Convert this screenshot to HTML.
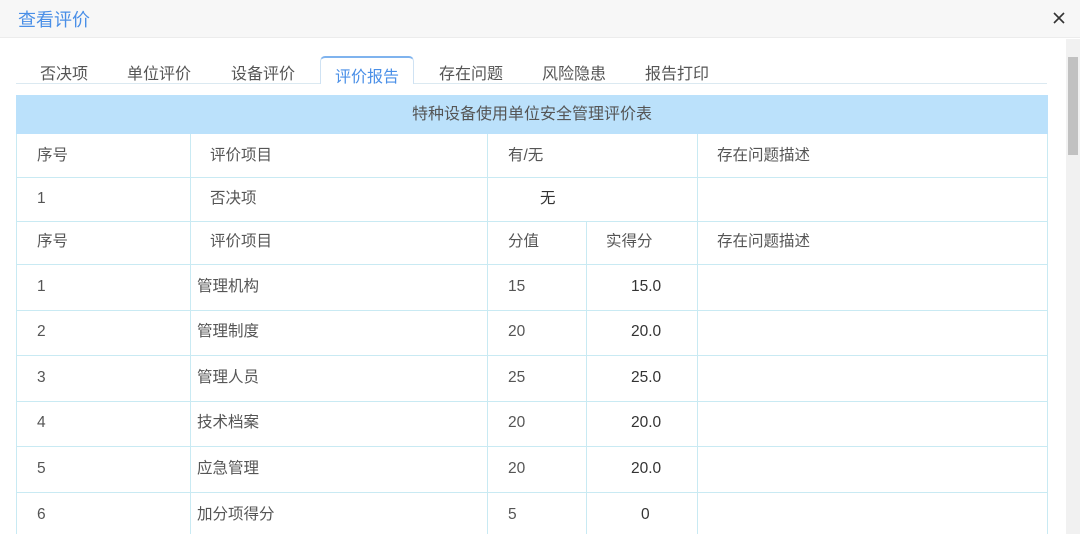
<!DOCTYPE html>
<html><head><meta charset="utf-8"><style>
*{margin:0;padding:0;box-sizing:border-box}
body{width:1080px;height:534px;overflow:hidden;background:#fff;font-family:"Liberation Sans","Noto Sans CJK SC",sans-serif;position:relative;color:#555;font-size:14px}
.hd{position:absolute;left:0;top:0;width:1080px;height:38px;background:#f7f7f7;border-bottom:1px solid #ececec}
.ttl{position:absolute;left:18px;top:6px;font-size:18px;color:#4a8fe7}
.x{position:absolute;left:1052px;top:11px;width:14px;height:14px}
.sb{position:absolute;left:1066px;top:39px;width:14px;height:495px;background:#f1f1f1}
.th{position:absolute;left:1068px;top:57px;width:10px;height:98px;background:#c1c1c1}
.tab{position:absolute;top:60px;font-size:16px;color:#555}
.tabline{position:absolute;left:16px;top:83px;width:1031px;height:1px;background:#dbe9f1}
.act{position:absolute;left:320px;top:56px;width:94px;height:28px;border:1px solid #cfe2f3;border-top:2px solid #7fb3ee;border-bottom:none;border-radius:5px 5px 0 0;background:#fff}
.cap{position:absolute;left:16px;top:95px;width:1032px;height:39px;background:#bbe1fb;text-align:center;line-height:39px;font-size:16px;color:#555}
.h{position:absolute;height:1px;background:#c9eaf3}
.v{position:absolute;width:1px;background:#c9eaf3}
.t{position:absolute;font-size:15.5px;line-height:20px;color:#555}
.d{color:#333}
</style></head><body>
<div class="hd"><div class="ttl">查看评价</div><svg class="x" viewBox="0 0 14 14"><path d="M2 2L12 12M12 2L2 12" stroke="#333" stroke-width="1.6"/></svg></div>
<div class="sb"></div><div class="th"></div>
<div class="tabline"></div>
<div class="act"></div>
<div class="tab" style="left:40px">否决项</div>
<div class="tab" style="left:127px">单位评价</div>
<div class="tab" style="left:231px">设备评价</div>
<div class="tab" style="left:335px;top:63px;color:#4a8fe7">评价报告</div>
<div class="tab" style="left:439px">存在问题</div>
<div class="tab" style="left:542px">风险隐患</div>
<div class="tab" style="left:645px">报告打印</div>
<div class="cap">特种设备使用单位安全管理评价表</div>
<div class="v" style="left:16px;top:134px;height:400px"></div>
<div class="v" style="left:1047px;top:134px;height:400px"></div>
<div class="v" style="left:190px;top:134px;height:400px"></div>
<div class="v" style="left:487px;top:134px;height:400px"></div>
<div class="v" style="left:697px;top:134px;height:400px"></div>
<div class="v" style="left:586px;top:221px;height:313px"></div>
<div class="h" style="left:16px;width:1032px;top:177px"></div>
<div class="h" style="left:16px;width:1032px;top:221px"></div>
<div class="h" style="left:16px;width:1032px;top:264px"></div>
<div class="h" style="left:16px;width:1032px;top:310px"></div>
<div class="h" style="left:16px;width:1032px;top:355px"></div>
<div class="h" style="left:16px;width:1032px;top:401px"></div>
<div class="h" style="left:16px;width:1032px;top:446px"></div>
<div class="h" style="left:16px;width:1032px;top:492px"></div>
<div class="t" style="left:37px;top:146px">序号</div>
<div class="t" style="left:210px;top:146px">评价项目</div>
<div class="t" style="left:508px;top:146px">有/无</div>
<div class="t" style="left:717px;top:146px">存在问题描述</div>
<div class="t" style="left:37px;top:189px">1</div>
<div class="t" style="left:210px;top:189px">否决项</div>
<div class="t d" style="left:540px;top:189px">无</div>
<div class="t" style="left:37px;top:232px">序号</div>
<div class="t" style="left:210px;top:232px">评价项目</div>
<div class="t" style="left:508px;top:232px">分值</div>
<div class="t" style="left:606px;top:232px">实得分</div>
<div class="t" style="left:717px;top:232px">存在问题描述</div>
<div class="t" style="left:37px;top:277px">1</div><div class="t" style="left:197px;top:277px">管理机构</div><div class="t" style="left:508px;top:277px">15</div><div class="t d" style="left:631px;top:277px">15.0</div>
<div class="t" style="left:37px;top:322px">2</div><div class="t" style="left:197px;top:322px">管理制度</div><div class="t" style="left:508px;top:322px">20</div><div class="t d" style="left:631px;top:322px">20.0</div>
<div class="t" style="left:37px;top:368px">3</div><div class="t" style="left:197px;top:368px">管理人员</div><div class="t" style="left:508px;top:368px">25</div><div class="t d" style="left:631px;top:368px">25.0</div>
<div class="t" style="left:37px;top:413px">4</div><div class="t" style="left:197px;top:413px">技术档案</div><div class="t" style="left:508px;top:413px">20</div><div class="t d" style="left:631px;top:413px">20.0</div>
<div class="t" style="left:37px;top:459px">5</div><div class="t" style="left:197px;top:459px">应急管理</div><div class="t" style="left:508px;top:459px">20</div><div class="t d" style="left:631px;top:459px">20.0</div>
<div class="t" style="left:37px;top:505px">6</div><div class="t" style="left:197px;top:505px">加分项得分</div><div class="t" style="left:508px;top:505px">5</div><div class="t d" style="left:641px;top:505px">0</div>
</body></html>
